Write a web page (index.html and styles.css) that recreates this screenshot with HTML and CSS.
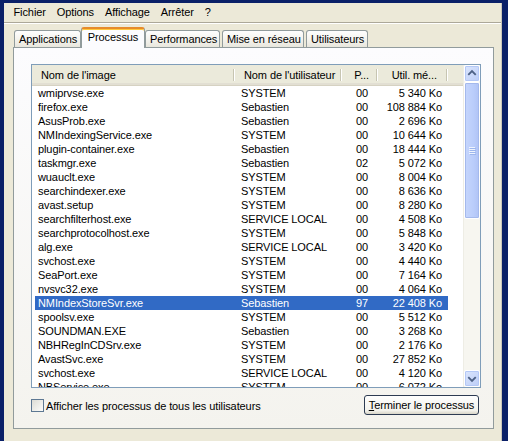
FILE: index.html
```html
<!DOCTYPE html>
<html lang="fr">
<head>
<meta charset="utf-8">
<title>Gestionnaire des tâches</title>
<link rel="stylesheet" href="styles.css">
</head>
<body>
<div class="window">
  <div class="menubar">
    <span class="menu">Fichier</span>
    <span class="menu">Options</span>
    <span class="menu">Affichage</span>
    <span class="menu">Arrêter</span>
    <span class="menu">?</span>
  </div>
  <div class="tabs">
    <div class="tab t-app">Applications</div>
    <div class="tab sel t-proc">Processus</div>
    <div class="tab t-perf">Performances</div>
    <div class="tab t-net">Mise en réseau</div>
    <div class="tab t-user">Utilisateurs</div>
  </div>
  <div class="panel">
    <div class="list">
      <div class="content">
        <div class="header">
          <div class="h h1">Nom de l'image</div>
          <div class="h h2">Nom de l'utilisateur</div>
          <div class="h h3">P...</div>
          <div class="h h4">Util. mé...</div>
          <div class="h h5"></div>
        </div>
        <div class="rows">
          <div class="row"><span class="c1">wmiprvse.exe</span><span class="c2">SYSTEM</span><span class="c3">00</span><span class="c4">5 340 Ko</span></div>
          <div class="row"><span class="c1">firefox.exe</span><span class="c2">Sebastien</span><span class="c3">00</span><span class="c4">108 884 Ko</span></div>
          <div class="row"><span class="c1">AsusProb.exe</span><span class="c2">Sebastien</span><span class="c3">00</span><span class="c4">2 696 Ko</span></div>
          <div class="row"><span class="c1">NMIndexingService.exe</span><span class="c2">SYSTEM</span><span class="c3">00</span><span class="c4">10 644 Ko</span></div>
          <div class="row"><span class="c1">plugin-container.exe</span><span class="c2">Sebastien</span><span class="c3">00</span><span class="c4">18 444 Ko</span></div>
          <div class="row"><span class="c1">taskmgr.exe</span><span class="c2">Sebastien</span><span class="c3">02</span><span class="c4">5 072 Ko</span></div>
          <div class="row"><span class="c1">wuauclt.exe</span><span class="c2">SYSTEM</span><span class="c3">00</span><span class="c4">8 004 Ko</span></div>
          <div class="row"><span class="c1">searchindexer.exe</span><span class="c2">SYSTEM</span><span class="c3">00</span><span class="c4">8 636 Ko</span></div>
          <div class="row"><span class="c1">avast.setup</span><span class="c2">SYSTEM</span><span class="c3">00</span><span class="c4">8 280 Ko</span></div>
          <div class="row"><span class="c1">searchfilterhost.exe</span><span class="c2">SERVICE LOCAL</span><span class="c3">00</span><span class="c4">4 508 Ko</span></div>
          <div class="row"><span class="c1">searchprotocolhost.exe</span><span class="c2">SYSTEM</span><span class="c3">00</span><span class="c4">5 848 Ko</span></div>
          <div class="row"><span class="c1">alg.exe</span><span class="c2">SERVICE LOCAL</span><span class="c3">00</span><span class="c4">3 420 Ko</span></div>
          <div class="row"><span class="c1">svchost.exe</span><span class="c2">SYSTEM</span><span class="c3">00</span><span class="c4">4 440 Ko</span></div>
          <div class="row"><span class="c1">SeaPort.exe</span><span class="c2">SYSTEM</span><span class="c3">00</span><span class="c4">7 164 Ko</span></div>
          <div class="row"><span class="c1">nvsvc32.exe</span><span class="c2">SYSTEM</span><span class="c3">00</span><span class="c4">4 064 Ko</span></div>
          <div class="row selected"><span class="c1">NMIndexStoreSvr.exe</span><span class="c2">Sebastien</span><span class="c3">97</span><span class="c4">22 408 Ko</span></div>
          <div class="row"><span class="c1">spoolsv.exe</span><span class="c2">SYSTEM</span><span class="c3">00</span><span class="c4">5 512 Ko</span></div>
          <div class="row"><span class="c1">SOUNDMAN.EXE</span><span class="c2">Sebastien</span><span class="c3">00</span><span class="c4">3 268 Ko</span></div>
          <div class="row"><span class="c1">NBHRegInCDSrv.exe</span><span class="c2">SYSTEM</span><span class="c3">00</span><span class="c4">2 176 Ko</span></div>
          <div class="row"><span class="c1">AvastSvc.exe</span><span class="c2">SYSTEM</span><span class="c3">00</span><span class="c4">27 852 Ko</span></div>
          <div class="row"><span class="c1">svchost.exe</span><span class="c2">SERVICE LOCAL</span><span class="c3">00</span><span class="c4">4 120 Ko</span></div>
          <div class="row"><span class="c1">NBService.exe</span><span class="c2">SYSTEM</span><span class="c3">00</span><span class="c4">6 072 Ko</span></div>
        </div>
      </div>
      <div class="scrollbar">
        <div class="sbtn">
          <svg width="15" height="15" viewBox="0 0 15 15"><polyline points="3.5,9 7.5,5 11.5,9" fill="none" stroke="#4d6185" stroke-width="2"/></svg>
        </div>
        <div class="thumb">
          <div class="grip"><i></i><i></i><i></i><i></i></div>
        </div>
        <div class="track"></div>
        <div class="sbtn">
          <svg width="15" height="15" viewBox="0 0 15 15"><polyline points="3.5,6 7.5,10 11.5,6" fill="none" stroke="#4d6185" stroke-width="2"/></svg>
        </div>
      </div>
    </div>
    <div class="bottom">
      <label class="check"><span class="box"></span><span>Afficher les processus de tous les utilisateurs</span></label>
      <button class="btn"><u>T</u>erminer le processus</button>
    </div>
  </div>
</div>
</body>
</html>
```
FILE: styles.css
```css
* { box-sizing: border-box; }
html, body {
  margin: 0;
  padding: 0;
}
body {
  width: 508px;
  height: 441px;
  overflow: hidden;
  background: #0a2068;
  font-family: "Liberation Sans", Arial, sans-serif;
  font-size: 11px;
  letter-spacing: -0.1px;
  color: #000;
}
.window {
  margin: 3px 6px 0 4px;
  height: 438px;
  background: #ece9d8;
  border-right: 1px solid #c9c6b8;
}
.menubar {
  height: 20px;
  display: flex;
  align-items: center;
  padding-left: 4px;
  border-bottom: 1px solid #aca899;
  box-shadow: 0 1px 0 #fff;
}
.menu {
  padding: 0 5.5px;
  line-height: 17px;
}
.tabs {
  margin-top: 4px;
  height: 21px;
  display: flex;
  align-items: flex-end;
  padding-left: 10px;
  margin-bottom: -1px;
  position: relative;
  z-index: 1;
}
.tab {
  height: 17px;
  margin-bottom: 1px;
  padding: 0 4px;
  border: 1px solid #919b9c;
  border-bottom: none;
  border-radius: 3px 3px 0 0;
  background: linear-gradient(#fefefe, #f0efe8 70%, #e8e6dc);
  line-height: 17px;
  white-space: nowrap;
  text-align: center;
}
.t-app { width: 67px; }
.t-proc { width: 64px; }
.t-perf { width: 75px; }
.t-net { width: 82px; margin-left: 2px; }
.t-user { width: 62px; margin-left: 2px; }
.tab.sel {
  height: 21px;
  margin-bottom: 0;
  background: #fcfcfe;
  border-top: 2px solid #e68b2c;
  line-height: 16px;
  padding-bottom: 3px;
  box-shadow: inset 0 1px 0 #ffc83c;
}
.panel {
  margin: 0 7px 0 9px;
  height: 382px;
  border: 1px solid #919b9c;
  background: linear-gradient(#fcfcfe, #f4f3ee);
  padding: 16px 13px 0 17px;
}
.list {
  width: 450px;
  height: 324px;
  border: 1px solid #7f9db9;
  background: #fff;
  display: flex;
  overflow: hidden;
}
.content {
  width: 431px;
  overflow: hidden;
}
.header {
  height: 21px;
  display: flex;
  background: #ebeadb;
  border-bottom: 1px solid #d6d2c2;
  box-shadow: inset 0 -2px 0 #e2dfd3;
}
.h {
  position: relative;
  line-height: 20px;
  white-space: nowrap;
}
.h1 { width: 203px; padding-left: 9px; }
.h2 { width: 107px; padding-left: 9px; }
.h3 { width: 36px; text-align: right; padding-right: 9px; }
.h4 { width: 70px; text-align: right; padding-right: 11px; }
.h5 { flex: 1; }
.h1::after, .h2::after, .h3::after, .h4::after {
  content: "";
  position: absolute;
  right: 1px;
  top: 4px;
  bottom: 4px;
  width: 1px;
  background: #c7c5b2;
}
.h1::before, .h2::before, .h3::before, .h4::before {
  content: "";
  position: absolute;
  right: 0;
  top: 4px;
  bottom: 4px;
  width: 1px;
  background: #fff;
}
.rows {
  display: flex;
  flex-direction: column;
}
.row {
  height: 14px;
  margin-left: 3px;
  width: 413px;
  display: flex;
  line-height: 14px;
  white-space: nowrap;
}
.row span { display: block; overflow: hidden; }
.c1 { width: 200px; padding-left: 3px; }
.c2 { width: 107px; padding-left: 6px; }
.c3 { width: 35px; text-align: right; padding-right: 9px; }
.c4 { width: 71px; text-align: right; padding-right: 6px; }
.row.selected {
  background: #316ac5;
  color: #fff;
}
.scrollbar {
  width: 17px;
  display: flex;
  flex-direction: column;
  background: #f7f6f0;
  border-left: 1px solid #eeede5;
}
.sbtn {
  height: 17px;
  flex: none;
  border: 1px solid #fff;
  border-radius: 2px;
  background: linear-gradient(135deg, #dbe6fd, #bccdf7);
  display: flex;
  align-items: center;
  justify-content: center;
  box-shadow: inset 0 0 0 1px #b4c8f6;
}
.thumb {
  height: 137px;
  flex: none;
  border: 1px solid #fff;
  border-radius: 2px;
  background: linear-gradient(90deg, #c6d6fc, #bacdfb 60%, #b0c3f5);
  box-shadow: inset 0 0 0 1px #a4b9ec;
  display: flex;
  align-items: center;
  justify-content: center;
}
.grip {
  display: flex;
  flex-direction: column;
  gap: 1px;
}
.grip i {
  display: block;
  width: 6px;
  height: 1px;
  background: #eef4fe;
  box-shadow: 1px 1px 0 #9db6ee;
}
.track { flex: 1; }
.bottom {
  margin-top: 7px;
  display: flex;
  justify-content: space-between;
  align-items: center;
  padding-right: 1px;
}
.check {
  display: flex;
  align-items: center;
  gap: 2px;
  margin-top: 1px;
}
.box {
  width: 13px;
  height: 13px;
  border: 1px solid #5d7893;
  background: linear-gradient(135deg, #dcdcd5, #fcfcfa);
}
.btn {
  width: 115px;
  height: 20px;
  border: 1px solid #2d3b52;
  border-radius: 3px;
  background: linear-gradient(#fefefe, #f3f2ec 80%, #d8d5c8);
  font-family: "Liberation Sans", Arial, sans-serif;
  font-size: 11px;
  letter-spacing: -0.1px;
  color: #000;
  padding: 0;
  line-height: 18px;
}
```
